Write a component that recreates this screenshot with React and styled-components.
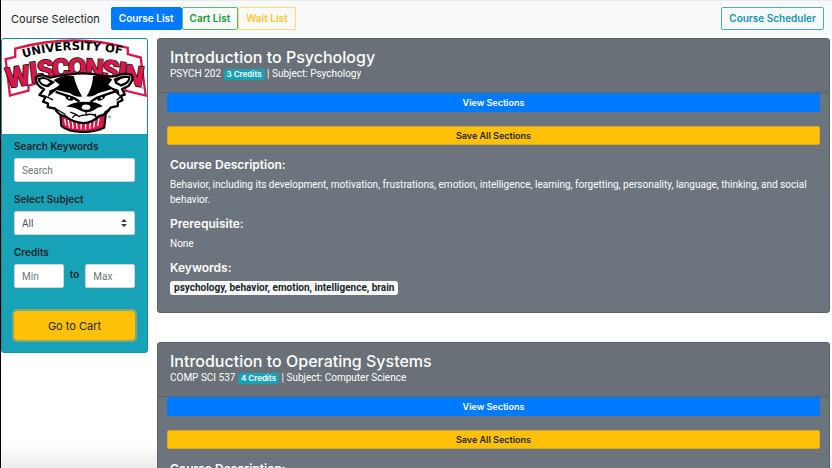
import React from "react";
import styled, { createGlobalStyle, css } from "styled-components";

const GlobalStyle = createGlobalStyle`
  *, *::before, *::after { box-sizing: border-box; }
  html { scrollbar-width: none; }
  body {
    margin: 0;
    background: #fff linear-gradient(to top, #ececec, #fff 24px) fixed;
    color: #212529;
    font-family: Roboto, "Liberation Sans", sans-serif;
    font-size: 10px;
    line-height: 15px;
  }
  button, input, select { font-family: inherit; margin: 0; }
`;

const strong = css`
  font-family: Inter, "Liberation Sans", sans-serif;
  font-weight: 600;
`;

const Page = styled.div`
  min-height: 100vh;
  border-left: 1px solid #000;
`;

const Navbar = styled.nav`
  display: flex;
  align-items: center;
  height: 35px;
  padding: 1px 8px 0 10px;
  background: #f8f9fa;
  border-top: 1px solid #e9eaec;
`;

const Brand = styled.a`
  margin-right: 11px;
  color: #212529;
  font-family: Inter, "Liberation Sans", sans-serif;
  font-size: 11px;
  line-height: 18px;
  text-decoration: none;
`;

const tones = {
  primary: css`color: #fff; background: #007bff; border-color: #007bff;`,
  success: css`color: #169b34; border-color: #5cb873;`,
  warning: css`color: #ffc62e; border-color: #ffd970;`,
  info: css`color: #1297aa; border-color: #4cadbb; margin-left: auto;`,
};

const NavButton = styled.button`
  ${strong}
  height: 23px;
  padding: 0 7px;
  border: 1px solid;
  border-radius: 2px;
  background: transparent;
  font-size: 10px;
  line-height: 15px;
  white-space: nowrap;
  ${(p) => tones[p.$tone]}
`;

const Layout = styled.div`
  display: grid;
  grid-template-columns: 147px minmax(0, 1fr);
  gap: 9px;
  align-items: start;
  padding: 3px 2px 0 0;
`;

const Sidebar = styled.aside`
  overflow: hidden;
  border: 1px solid #128fa1;
  border-radius: 3px;
  background: #17a2b8;
`;

const Logo = styled.svg`
  display: block;
  width: 100%;
  background: #fff;
`;

const Form = styled.form`
  padding: 5px 12px 12px;
`;

const Field = styled.div`
  margin-bottom: 10px;
`;

const Label = styled.label`
  ${strong}
  display: block;
  margin-bottom: 4px;
  font-size: 10px;
  line-height: 15px;
`;

const control = css`
  display: block;
  width: 100%;
  min-width: 0;
  height: 24px;
  padding: 0 7px;
  border: 1px solid #ced4da;
  border-radius: 2px;
  background: #fff;
  color: #495057;
  font-size: 10px;
  line-height: 15px;
`;

const TextInput = styled.input`
  ${control}
  &::placeholder { color: #6c757d; opacity: 1; }
`;

const SelectBox = styled.div`
  position: relative;
`;

const Select = styled.select`
  ${control}
  appearance: none;
`;

const SelectArrows = styled.svg`
  position: absolute;
  right: 8px;
  top: 8px;
  width: 6px;
  height: 8px;
  pointer-events: none;
`;

const Range = styled.div`
  display: grid;
  grid-template-columns: 1fr auto 1fr;
  column-gap: 6px;
  margin-bottom: 23px;
`;

const RangeWord = styled.span`
  ${strong}
  line-height: 20px;
`;

const CartButton = styled.button`
  display: block;
  width: 100%;
  height: 29px;
  padding: 0;
  border: 1px solid #ffc107;
  border-radius: 3px;
  background: #ffc107;
  box-shadow: 0 0 0 2px #85a777;
  color: #212529;
  font-family: Inter, "Liberation Sans", sans-serif;
  font-size: 11px;
  line-height: 18px;
`;

const Courses = styled.main`
  display: grid;
  gap: 29px;
`;

const Card = styled.article`
  border: 1px solid #596169;
  border-radius: 3px;
  background: #6c757d;
  color: #fff;
`;

const CardHeader = styled.header`
  padding: 8px 12px 11px;
  border-bottom: 1px solid #5b636a;
  background: #697077;
`;

const CourseTitle = styled.h2`
  margin: 0;
  font-family: Inter, "Liberation Sans", sans-serif;
  font-size: 16px;
  font-weight: 500;
  line-height: 20px;
`;

const CourseMeta = styled.p`
  margin: 0;
  font-size: 10px;
  line-height: 14px;
`;

const Credits = styled.span`
  ${strong}
  display: inline-block;
  padding: 0 3px;
  border-radius: 2px;
  background: #17a2b8;
  font-size: 8px;
  line-height: 11px;
`;

const Actions = styled.div`
  display: grid;
  gap: 14px;
  padding: 0 9px;
`;

const BlockButton = styled.button`
  ${strong}
  width: 100%;
  height: 19px;
  padding: 0;
  border: 1px solid ${(p) => (p.$save ? "#d5a92a" : "#007bff")};
  border-radius: ${(p) => (p.$save ? "2px" : "0 0 2px 2px")};
  background: ${(p) => (p.$save ? "#ffc107" : "#007bff")};
  color: ${(p) => (p.$save ? "#212529" : "#fff")};
  font-size: 9px;
  line-height: 14px;
`;

const CardBody = styled.div`
  padding: 12px 12px 17px;
`;

const Heading = styled.h3`
  ${strong}
  margin: 0 0 5px;
  font-size: 12px;
  line-height: 15px;
`;

const Copy = styled.p`
  margin: 0 0 9px;
  font-size: 10px;
  line-height: 15px;
`;

const Keywords = styled.span`
  display: inline-block;
  padding: 0 4px;
  border-radius: 3px;
  background: #f8f9fa;
  color: #212529;
  font-weight: 700;
  line-height: 14px;
`;

const letters = [
  ["W", 57, 152, 86, -9],
  ["I", 103, 140, 88, -7],
  ["S", 138, 132, 84, -5],
  ["C", 182, 125, 80, -2],
  ["O", 231, 122, 80, 0],
  ["N", 282, 126, 80, 3],
  ["S", 330, 133, 84, 5],
  ["I", 363, 141, 88, 7],
  ["N", 398, 150, 86, 9],
];

function BadgerLogo() {
  return (
    <Logo viewBox="4 9 438 288" role="img" aria-label="University of Wisconsin">
      <path d="M15 70L44 63V38Q220-10 384 36V55L423 65L438 180L376 165V148Q220 104 84 150V165L28 180Z" fill="#fff" stroke="#d8174b" strokeWidth="7" />
      <path id="arc" d="M68 66Q222 20 396 62" fill="none" />
      <text fontFamily="DejaVu Sans, sans-serif" fontWeight="700" fontSize="35" fill="#000">
        <textPath href="#arc">UNIVERSITY OF</textPath>
      </text>
      <g fontFamily="Roboto, sans-serif" fontWeight="900" textAnchor="middle" fill="#d8174b" stroke="#000" strokeWidth="4" paintOrder="stroke">
        {letters.map(([letter, x, y, size, angle]) => (
          <text key={x} x={x} y={y} fontSize={size} transform={`rotate(${angle} ${x} ${y})`}>{letter}</text>
        ))}
      </g>
      <path d="M180 235Q250 256 318 233L313 277Q286 291 246 290Q204 290 183 272Z" fill="#d8174b" stroke="#000" strokeWidth="6" />
      <path d="M193 250l4 20M204 254l4 23M216 256l3 24M229 258l2 23M243 259v23M257 259l-1 23M271 257l-2 24M284 254l-3 23M297 249l-4 23" stroke="#fff" strokeWidth="4" />
      <path d="M106 125Q122 112 149 126Q180 119 209 116Q258 108 304 120Q331 124 348 121Q374 110 396 118Q403 132 386 151L367 160L375 177L363 181L368 194L354 200L354 211L332 216Q322 237 297 242Q276 263 250 263Q217 261 196 243Q174 240 164 219L142 215L143 204L128 198L135 185L117 178L131 161Q105 149 106 125Z" fill="#fff" stroke="#000" strokeWidth="7" strokeLinejoin="round" />
      <path d="M110 128Q129 118 145 130L165 139L143 155Q117 152 110 128ZM341 130Q374 113 393 123Q392 145 364 153L346 144Z" fill="#000" />
      <path d="M119 132Q136 126 149 140L140 147Q122 146 119 132ZM386 127Q364 124 351 139L363 145Q383 141 386 127Z" fill="#fff" />
      <path d="M160 133Q188 116 221 121Q227 151 246 183Q223 185 210 173L169 163L142 185L148 164Q169 157 178 147Z" fill="#000" />
      <path d="M337 131Q313 116 279 121Q278 154 259 183Q280 184 294 173L335 161L361 184L356 162Q336 157 325 147Z" fill="#000" />
      <path d="M166 169L220 187L238 198M346 167L290 187L271 199" fill="none" stroke="#000" strokeWidth="7" />
      <path d="M194 181Q199 198 217 195L221 188ZM317 180Q311 197 294 195L290 188Z" fill="#000" />
      <circle cx="207" cy="187" r="3" fill="#fff" /><circle cx="305" cy="187" r="3" fill="#fff" />
      <path d="M198 213Q224 197 257 199Q286 197 309 212Q291 215 280 225Q260 235 240 225Q224 215 198 213Z" fill="#000" />
      <ellipse cx="258" cy="215" rx="13" ry="8" fill="#fff" />
      <path d="M210 230Q225 234 237 243Q246 238 257 239Q276 232 288 243M258 224V237M217 248Q224 232 239 244M285 235L289 247M165 219L196 237M334 216L313 231M129 179L158 193M369 178L350 194" fill="none" stroke="#000" strokeWidth="4" />
      <circle cx="329" cy="244" r="3" fill="none" stroke="#444" strokeWidth="2" />
      <circle cx="427" cy="157" r="2" fill="#d8174b" />
    </Logo>
  );
}

function Course({ title, code, credits, subject, children }) {
  return (
    <Card>
      <CardHeader>
        <CourseTitle>{title}</CourseTitle>
        <CourseMeta>
          {code} <Credits>{credits} Credits</Credits> | Subject: {subject}
        </CourseMeta>
      </CardHeader>
      <Actions>
        <BlockButton type="button">View Sections</BlockButton>
        <BlockButton type="button" $save>Save All Sections</BlockButton>
      </Actions>
      <CardBody>
        <Heading>Course Description:</Heading>
        {children}
      </CardBody>
    </Card>
  );
}

export default function App() {
  return (
    <Page>
      <GlobalStyle />
      <Navbar>
        <Brand href="#">Course Selection</Brand>
        <NavButton type="button" $tone="primary">Course List</NavButton>
        <NavButton type="button" $tone="success">Cart List</NavButton>
        <NavButton type="button" $tone="warning">Wait List</NavButton>
        <NavButton type="button" $tone="info">Course Scheduler</NavButton>
      </Navbar>
      <Layout>
        <Sidebar>
          <BadgerLogo />
          <Form onSubmit={(e) => e.preventDefault()}>
            <Field>
              <Label htmlFor="search">Search Keywords</Label>
              <TextInput id="search" type="text" placeholder="Search" />
            </Field>
            <Field>
              <Label htmlFor="subject">Select Subject</Label>
              <SelectBox>
                <Select id="subject" defaultValue="All">
                  <option>All</option>
                </Select>
                <SelectArrows viewBox="0 0 6 8" aria-hidden="true">
                  <path d="M0 3L3 0L6 3ZM0 5H6L3 8Z" fill="#343a40" />
                </SelectArrows>
              </SelectBox>
            </Field>
            <Label htmlFor="min">Credits</Label>
            <Range>
              <TextInput id="min" type="text" placeholder="Min" />
              <RangeWord>to</RangeWord>
              <TextInput type="text" placeholder="Max" aria-label="Maximum credits" />
            </Range>
            <CartButton type="button">Go to Cart</CartButton>
          </Form>
        </Sidebar>
        <Courses>
          <Course title="Introduction to Psychology" code="PSYCH 202" credits={3} subject="Psychology">
            <Copy>
              Behavior, including its development, motivation, frustrations, emotion, intelligence, learning, forgetting, personality, language, thinking, and social behavior.
            </Copy>
            <Heading>Prerequisite:</Heading>
            <Copy>None</Copy>
            <Heading>Keywords:</Heading>
            <Keywords>psychology, behavior, emotion, intelligence, brain</Keywords>
          </Course>
          <Course title="Introduction to Operating Systems" code="COMP SCI 537" credits={4} subject="Computer Science" />
        </Courses>
      </Layout>
    </Page>
  );
}
